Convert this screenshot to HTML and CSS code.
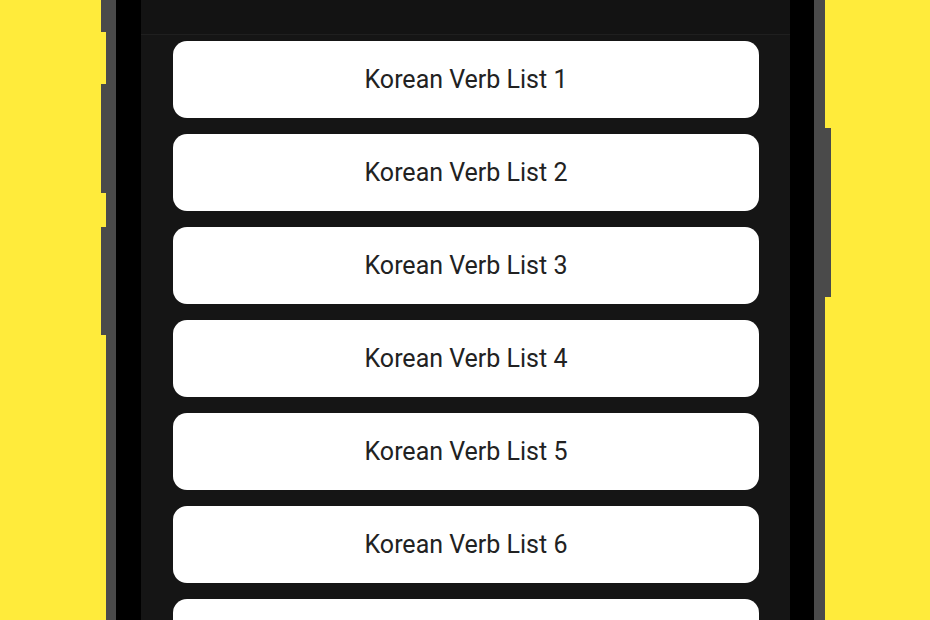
FILE: index.html
```html
<!DOCTYPE html>
<html lang="en">
<head>
  <meta charset="UTF-8">
  <meta name="viewport" content="width=device-width, initial-scale=1.0">
  <title>Korean Verb Lists</title>
  <link rel="stylesheet" href="styles.css">
</head>
<body>
  <div class="stage">
    <div class="keys keys-left">
      <div class="key key-top"></div>
      <div class="key key-vol-up"></div>
      <div class="key key-vol-down"></div>
    </div>

    <div class="phone">
      <div class="bezel">
        <div class="screen">
          <div class="topbar"></div>
          <div class="list">
            <div class="item">Korean Verb List 1</div>
            <div class="item">Korean Verb List 2</div>
            <div class="item">Korean Verb List 3</div>
            <div class="item">Korean Verb List 4</div>
            <div class="item">Korean Verb List 5</div>
            <div class="item">Korean Verb List 6</div>
            <div class="item">Korean Verb List 7</div>
          </div>
        </div>
      </div>
    </div>

    <div class="keys keys-right">
      <div class="key key-power"></div>
    </div>
  </div>
</body>
</html>
```

FILE: styles.css
```css
body {
  margin: 0;
  height: 620px;
  overflow: hidden;
  background-color: #ffeb3b;
  font-family: Roboto, "Liberation Sans", sans-serif;
}

.stage {
  display: flex;
  align-items: flex-start;
  padding-left: 101px;
  height: 620px;
}

.keys {
  display: flex;
  flex-direction: column;
  width: 6px;
}

.keys-left {
  width: 5px;
}

.key {
  background-color: #4a4a4a;
}

.key-top {
  height: 32px;
}

.key-vol-up {
  margin-top: 52px;
  height: 109px;
}

.key-vol-down {
  margin-top: 34px;
  height: 108px;
}

.key-power {
  margin-top: 128px;
  height: 169px;
}

.phone {
  width: 698px;
  height: 620px;
  background-color: #4a4a4a;
  padding: 0 11px 0 10px;
}

.bezel {
  height: 100%;
  background-color: #000;
  padding: 0 24px 0 25px;
}

.screen {
  height: 100%;
  background-color: #151515;
  display: flex;
  flex-direction: column;
  overflow: hidden;
}

.topbar {
  flex-shrink: 0;
  height: 34px;
  background-color: #131313;
  border-bottom: 1px solid #1f1f1f;
}

.list {
  display: flex;
  flex-direction: column;
  gap: 16px;
  padding: 6px 31px 0 32px;
}

.item {
  height: 77px;
  flex-shrink: 0;
  background-color: #fff;
  border-radius: 14px;
  display: flex;
  align-items: center;
  justify-content: center;
  font-size: 25px;
  color: #222;
}
```
